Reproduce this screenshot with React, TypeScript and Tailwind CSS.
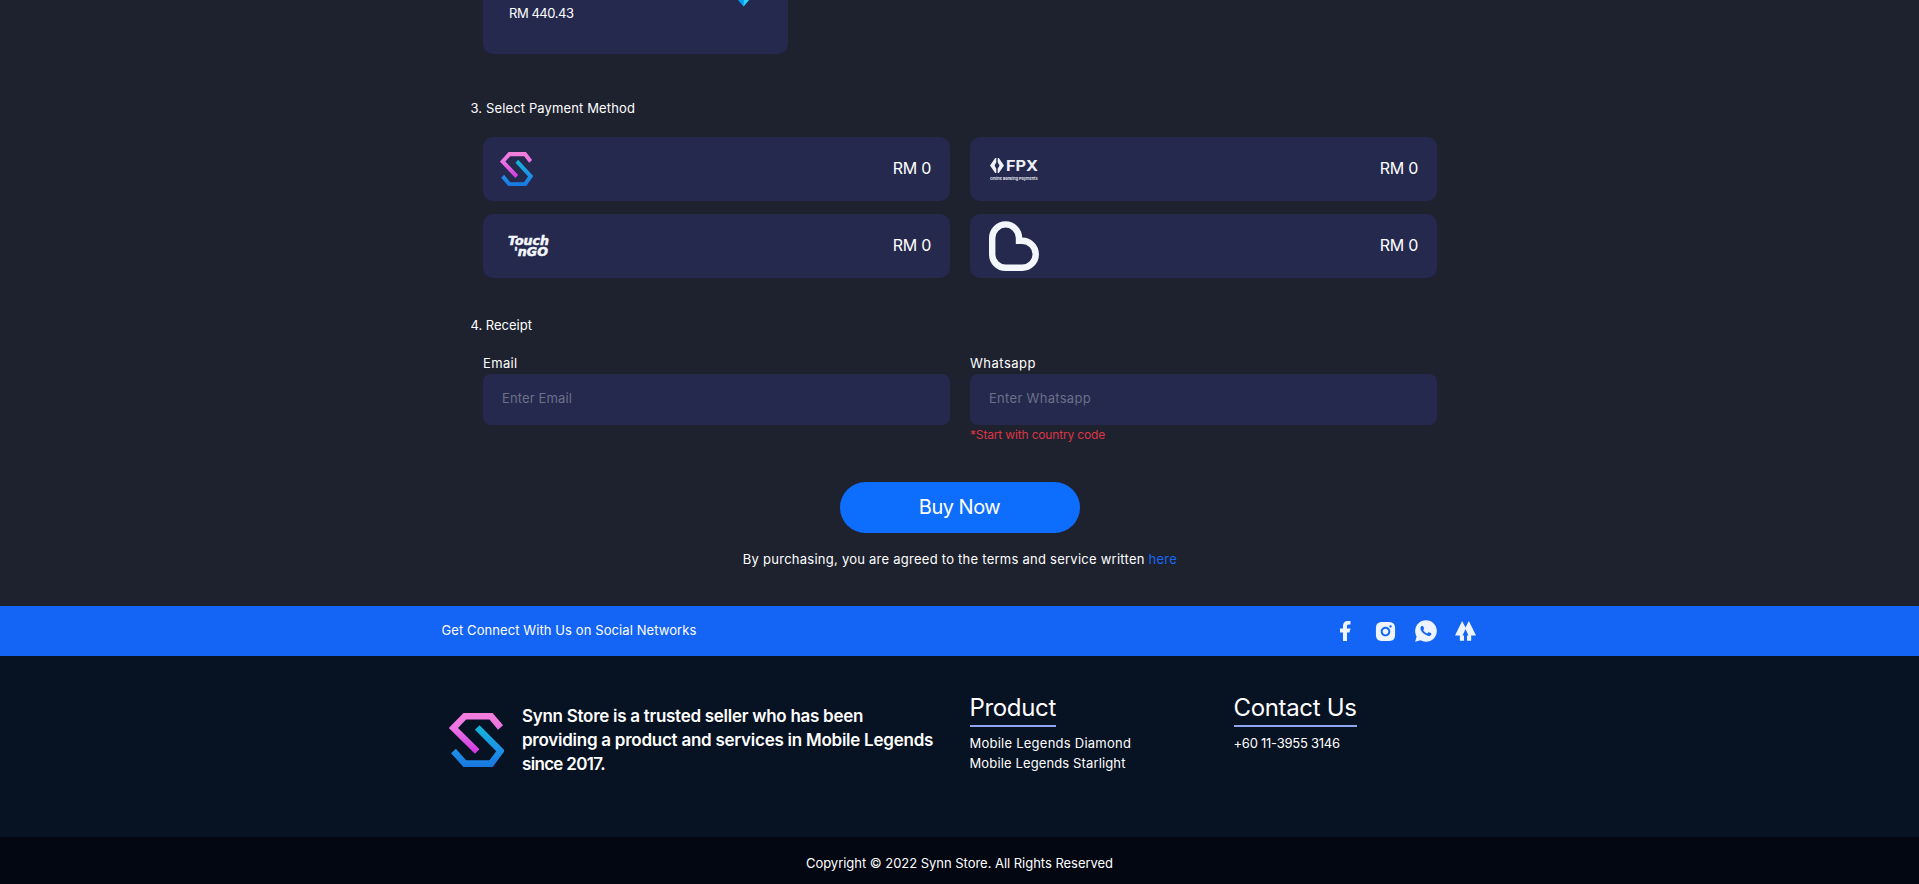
import { useId } from 'react';
import type { ReactNode } from 'react';
import { RiFacebookFill, RiInstagramFill, RiWhatsappFill } from 'react-icons/ri';

function SynnLogo({ className }: { className: string }) {
  const id = useId();
  return (
    <svg viewBox="8 13 56 54" className={className} fill="none" strokeWidth="6.6" preserveAspectRatio="none">
      <defs>
        <linearGradient id={`${id}p`} gradientUnits="userSpaceOnUse" x1="0" y1="13" x2="0" y2="52">
          <stop offset="0" stopColor="#f57fdc" />
          <stop offset="0.4" stopColor="#ea74e4" />
          <stop offset="1" stopColor="#d03be0" />
        </linearGradient>
        <linearGradient id={`${id}b`} gradientUnits="userSpaceOnUse" x1="0" y1="27" x2="0" y2="66">
          <stop offset="0" stopColor="#14b4d8" />
          <stop offset="0.6" stopColor="#1e90e8" />
          <stop offset="1" stopColor="#1878e0" />
        </linearGradient>
      </defs>
      <path d="M60 27.5 L50.5 16.3 H24 L12.5 28 L36.5 51.5" stroke={`url(#${id}p)`} />
      <path d="M36.5 27.5 L60 51 L50.5 63.6 H24 L12.5 51" stroke={`url(#${id}b)`} />
    </svg>
  );
}

function TouchNGoLogo() {
  return (
    <svg viewBox="0 0 42 22" className="ml-[9px] h-[22px] w-[42px] overflow-visible" fill="#f4f6fc" stroke="#f4f6fc" strokeWidth="0.5" fontFamily="'DejaVu Sans', sans-serif" fontWeight="700" fontStyle="italic">
      <text x="0" y="10.4" fontSize="12.5" textLength="41" lengthAdjust="spacingAndGlyphs">Touch</text>
      <text x="6" y="21.4" fontSize="12.5" textLength="34" lengthAdjust="spacingAndGlyphs">'nGO</text>
    </svg>
  );
}

function FpxLogo() {
  return (
    <svg viewBox="0 0 48 24" className="mt-px h-[24px] w-[48px] overflow-visible" fill="#eef1fa" fontFamily="Inter, sans-serif">
      <path d="M5.2 0 H6.3 V4.2 L4.6 7.5 L6.3 10.8 V15 H5.2 L0 7.5 Z" />
      <path d="M8.8 0 H7.7 V4.2 L9.5 7.5 L7.7 10.8 V15 H8.8 L14 7.5 Z" />
      <text x="16" y="13.2" fontSize="15" fontWeight="700" textLength="32" lengthAdjust="spacingAndGlyphs">FPX</text>
      <text x="0" y="21.8" fontSize="4" fontWeight="600" textLength="47.5" lengthAdjust="spacingAndGlyphs">Online Banking Payments</text>
    </svg>
  );
}

function HeartLogo() {
  return (
    <svg viewBox="0 0 50 50" className="h-[50px] w-[50px]" fill="none" stroke="#f3f7fc" strokeWidth="6.4">
      <path d="M3.2 17 A13.4 13.6 0 0 1 30 17 V19.7 H33.2 A13.5 13.5 0 0 1 33.2 46.8 H16.6 A13.4 13.4 0 0 1 3.2 33.4 Z" />
    </svg>
  );
}

function TreesIcon() {
  return (
    <svg viewBox="0 0 20 19" className="h-[20px] w-[21px]" fill="#eef4ff">
      <path d="M6.8 0 L10 6.2 L13.2 0 L20 13.8 H15.4 V18.8 H11.4 V13.8 H12.8 L10 7.6 L7.2 13.8 H8.6 V18.8 H4.6 V13.8 H0 Z" />
    </svg>
  );
}

function PaymentOption({ children, className }: { children: ReactNode; className: string }) {
  return (
    <div className={`flex h-16 items-center justify-between rounded-[10px] bg-[#25294e] pr-[19px] ${className}`}>
      {children}
      <span className="pb-[2px] text-base leading-6 tracking-[-0.3px]">RM 0</span>
    </div>
  );
}

function Field({ label, labelClass, placeholder, inputClass, note }: { label: string; labelClass: string; placeholder: string; inputClass: string; note?: string }) {
  return (
    <label className="block">
      <span className={`block pb-px leading-[20px] ${labelClass}`}>{label}</span>
      <input
        placeholder={placeholder}
        className={`block h-[51px] w-full rounded-[8px] bg-[#25294e] px-[19px] pb-[3px] placeholder:text-[#6a7089] ${inputClass}`}
      />
      {note && <span className="block text-[12px] leading-[19px] tracking-[-0.16px] text-[#dc3545]">{note}</span>}
    </label>
  );
}

export default function App() {
  return (
    <div className="flex h-[884px] flex-col overflow-hidden bg-[#1e222f] font-['Inter',sans-serif] text-[13px] text-white">
      <main className="h-[606px] shrink-0">
        <div className="mx-auto w-[979px]">
          <div className="ml-[13px] flex h-[53.5px] w-[305px] justify-between rounded-b-[10px] bg-[#25294e] pl-[26px] pr-[38px]">
            <span className="mt-[3px] leading-[20px] tracking-[-0.45px]">RM 440.43</span>
            <svg viewBox="0 0 12 7" className="h-[7px] w-[12px]">
              <path d="M0 0 H11 L5.5 6.5 Z" fill="#0a9bf0" />
              <path d="M6 0 H11 L5.5 6.5 Z" fill="#27d3f5" />
            </svg>
          </div>

          <h2 className="ml-[0.5px] mt-[44px] leading-[20px] tracking-[0.13px]">3. Select Payment Method</h2>
          <div className="ml-[13px] mt-[19.5px] grid w-[954px] grid-cols-2 gap-x-[20px] gap-y-[13px]">
            <PaymentOption className="pl-[17px]"><SynnLogo className="h-[34.5px] w-[33px]" /></PaymentOption>
            <PaymentOption className="pl-[20px]"><FpxLogo /></PaymentOption>
            <PaymentOption className="pl-[16px]"><TouchNGoLogo /></PaymentOption>
            <PaymentOption className="pl-[19px]"><HeartLogo /></PaymentOption>
          </div>

          <h2 className="ml-[0.5px] mt-[37px] leading-[20px]">4. Receipt</h2>
          <div className="ml-[13px] mt-[18px] grid h-[91px] w-[954px] grid-cols-2 gap-x-[20px]">
            <Field label="Email" labelClass="tracking-[0.34px]" placeholder="Enter Email" inputClass="tracking-[0.13px]" />
            <Field label="Whatsapp" labelClass="tracking-[0.5px]" placeholder="Enter Whatsapp" inputClass="tracking-[0.3px]" note="*Start with country code" />
          </div>

          <button className="mx-auto mt-[38px] block h-[51px] w-[240px] rounded-full bg-[#0d6efd] pb-[2px] text-[20px] leading-[30px] tracking-[-0.5px]">Buy Now</button>
          <p className="mt-[16px] pl-px text-center leading-[20px] tracking-[0.25px]">
            By purchasing, you are agreed to the terms and service written <a href="#terms" className="text-[#1668f2]">here</a>
          </p>
        </div>
      </main>

      <section className="h-[50px] shrink-0 bg-[#1464f6]">
        <div className="mx-auto flex h-full w-[1036px] items-center justify-between">
          <span className="tracking-[0.09px]">Get Connect With Us on Social Networks</span>
          <div className="flex items-center pr-[2px] text-[#eef4ff]">
            <RiFacebookFill className="mr-[16.5px] size-[24px]" />
            <RiInstagramFill className="mr-[16px] size-[23px]" />
            <RiWhatsappFill className="mb-px mr-[16px] size-[26px]" />
            <TreesIcon />
          </div>
        </div>
      </section>

      <footer className="h-[181px] shrink-0 bg-[#071222]">
        <div className="mx-auto flex w-[1022px] items-start">
          <div className="flex w-[521px] items-center pt-[48px]">
            <SynnLogo className="mr-[18px] h-[54px] w-[55.5px] shrink-0" />
            <p className="w-[420px] text-[17px] font-semibold leading-[24px]">
              <span className="block whitespace-nowrap tracking-[-0.28px]">Synn Store is a trusted seller who has been</span>
              <span className="block whitespace-nowrap tracking-[-0.25px]">providing a product and services in Mobile Legends</span>
              <span className="block whitespace-nowrap tracking-[-0.68px]">since 2017.</span>
            </p>
          </div>
          <div className="flex w-[264px] flex-col items-start pt-[34px] leading-[20px]">
            <h3 className="mb-[6px] border-b-2 border-[#8ea6f0] pt-px text-[24px] leading-[34px] tracking-[-0.33px]">Product</h3>
            <a href="#diamond" className="tracking-[0.24px]">Mobile Legends Diamond</a>
            <a href="#starlight" className="tracking-[0.13px]">Mobile Legends Starlight</a>
          </div>
          <div className="flex flex-col items-start pt-[34px] leading-[20px]">
            <h3 className="mb-[6px] border-b-2 border-[#8ea6f0] pt-px text-[24px] leading-[34px] tracking-[-0.34px]">Contact Us</h3>
            <span className="tracking-[-0.25px]">+60 11-3955 3146</span>
          </div>
        </div>
      </footer>

      <div className="flex h-[47px] shrink-0 items-center justify-center bg-[#020712] pt-[6px] tracking-[-0.03px]">
        Copyright © 2022 Synn Store. All Rights Reserved
      </div>
    </div>
  );
}
